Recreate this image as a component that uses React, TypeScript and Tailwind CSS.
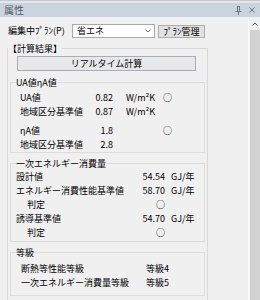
import React from "react";

function Row1({ label, value, unit, mark }: { label: string; value: string; unit?: string; mark?: boolean }) {
  return (
    <div className="flex h-[14px] items-center pl-[9px]">
      <span className="w-[70px] whitespace-nowrap">{label}</span>
      <span className="w-[23px] text-right">{value}</span>
      <span className="ml-[13px] w-[37px] whitespace-nowrap">{unit ?? ""}</span>
      <span className="w-[9px] text-center">{mark ? "○" : ""}</span>
    </div>
  );
}

function Row2({ label, value, unit, indent }: { label: string; value: string; unit?: string; indent?: boolean }) {
  return (
    <div className="flex h-[14px] items-center pl-[5px]">
      <span className={indent ? "w-[125px] pl-[11px] whitespace-nowrap" : "w-[125px] whitespace-nowrap"}>{label}</span>
      <span className="w-[24px] text-right">{value}</span>
      <span className="ml-[6px] whitespace-nowrap">{unit ?? ""}</span>
    </div>
  );
}

function Row3({ label, value }: { label: string; value: string }) {
  return (
    <div className="flex h-[14px] items-center pl-[10px]">
      <span className="w-[125px] whitespace-nowrap">{label}</span>
      <span>{value}</span>
    </div>
  );
}

export default function App() {
  return (
    <div className="w-[260px] h-[300px] overflow-hidden bg-[#f0f0f0] text-black text-[9px] leading-[14px] font-['Noto_Sans_CJK_JP',sans-serif] flex flex-col">
      <div className="h-[3px] shrink-0 bg-[#e3e6ea] border-t border-[#c4c9d0]" />
      <div className="h-[14px] shrink-0 bg-[#cbd3de] flex items-center pl-[4px] pr-[4px]">
        <span className="text-[10px] leading-[14px] text-[#4f5866]">属性</span>
        <div className="ml-auto flex items-center gap-[7px] mr-[1px]">
          <svg width="7" height="9" viewBox="0 0 7 9" fill="none" stroke="#707883" strokeWidth="1">
            <path d="M2 0.5 H5 M2.5 0.5 V5 M4.5 0.5 V5 M0.5 5.5 H6.5 M3.5 5.5 V9" />
          </svg>
          <svg width="6" height="6" viewBox="0 0 6 6" fill="none" stroke="#707883" strokeWidth="1">
            <path d="M0.5 0.5 L5.5 5.5 M5.5 0.5 L0.5 5.5" />
          </svg>
        </div>
      </div>
      <div className="flex flex-1 min-h-0">
        <div className="w-[248px] shrink-0">
          <div className="mt-[7px] flex items-center h-[14px]">
            <span className="ml-[8px] w-[64px] whitespace-nowrap">編集中ﾌﾟﾗﾝ(P)</span>
            <div className="w-[83px] h-[14px] bg-white border border-[#a9a9a9] flex items-center pl-[4px] pr-[3px]">
              <span>省エネ</span>
              <svg className="ml-auto" width="6" height="4" viewBox="0 0 6 4" fill="none" stroke="#606060" strokeWidth="1">
                <path d="M0.5 0.5 L3 3 L5.5 0.5" />
              </svg>
            </div>
            <div className="ml-[3px] mt-[1px] w-[47px] h-[13px] bg-[#e1e1e1] border border-[#adadad] flex items-center justify-center whitespace-nowrap">
              ﾌﾟﾗﾝ管理
            </div>
          </div>

          <fieldset className="ml-[7px] mt-[4px] w-[201px] border border-[#d9d9d9]">
            <legend className="leading-[13px]">【計算結果】</legend>
            <div className="mt-[1px] ml-[9px] w-[179px] h-[15px] bg-[#e6e8ea] border border-[#a7aeb6] flex items-center justify-center">
              リアルタイム計算
            </div>

            <fieldset className="ml-[2px] mt-[5px] w-[195px] border border-[#dcdcdc] pt-[2px]">
              <legend className="ml-[5px] leading-[13px]">UA値ηA値</legend>
              <Row1 label="UA値" value="0.82" unit="W/m²K" mark />
              <Row1 label="地域区分基準値" value="0.87" unit="W/m²K" />
              <div className="h-[5px]" />
              <Row1 label="ηA値" value="1.8" mark />
              <Row1 label="地域区分基準値" value="2.8" />
            </fieldset>

            <fieldset className="ml-[2px] mt-[4px] w-[195px] border border-[#dcdcdc] pb-[1px]">
              <legend className="ml-[5px] leading-[13px]">一次エネルギー消費量</legend>
              <Row2 label="設計値" value="54.54" unit="GJ/年" />
              <Row2 label="エネルギー消費性能基準値" value="58.70" unit="GJ/年" />
              <Row2 label="判定" value="○" indent />
              <Row2 label="誘導基準値" value="54.70" unit="GJ/年" />
              <Row2 label="判定" value="○" indent />
            </fieldset>

            <fieldset className="ml-[2px] mt-[4px] w-[195px] border border-[#dcdcdc] pt-[3px] pb-[5px]">
              <legend className="ml-[5px] leading-[13px]">等級</legend>
              <Row3 label="断熱等性能等級" value="等級4" />
              <Row3 label="一次エネルギー消費量等級" value="等級5" />
            </fieldset>

            <fieldset className="ml-[2px] mt-[3px] w-[195px] border border-[#dcdcdc]">
              <legend className="ml-[5px] leading-[13px]">詳細表示する項目</legend>
              <div className="h-[40px]" />
            </fieldset>
          </fieldset>
        </div>
        <div className="w-[12px] shrink-0 border-l border-white flex flex-col">
          <div className="h-[13px] shrink-0 flex items-center justify-center">
            <svg width="6" height="4" viewBox="0 0 6 4" fill="none" stroke="#606060" strokeWidth="1">
              <path d="M0.5 3.5 L3 1 L5.5 3.5" />
            </svg>
          </div>
          <div className="flex-1 ml-[1px] bg-[#d2d2d2]" />
        </div>
      </div>
    </div>
  );
}
